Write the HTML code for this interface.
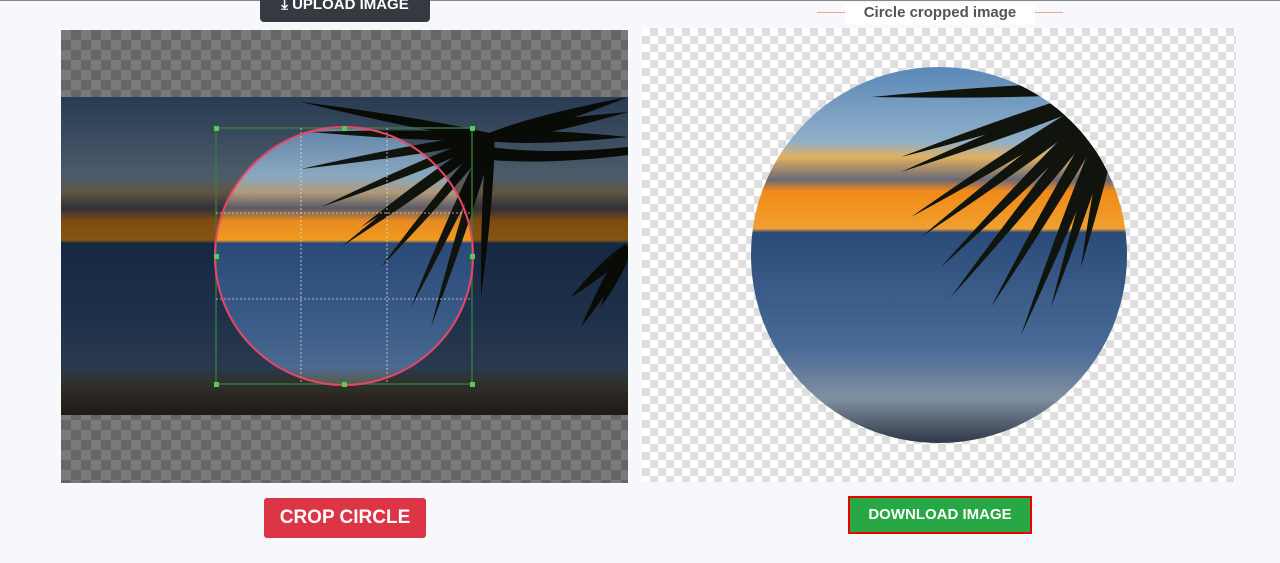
<!DOCTYPE html>
<html><head><meta charset="utf-8"><style>
body{margin:0;width:1280px;height:563px;background:#f7f8fc;position:relative;overflow:hidden;font-family:"Liberation Sans",sans-serif}
.topline{position:absolute;left:0;top:0;width:1280px;height:1px;background:#888}
.chkD{background-color:#7a7a7a;background-image:linear-gradient(45deg,#666 25%,transparent 25%,transparent 75%,#666 75%),linear-gradient(45deg,#666 25%,transparent 25%,transparent 75%,#666 75%);background-size:20px 20px;background-position:0 0,10px 10px}
.chkL{background-color:#fff;background-image:linear-gradient(45deg,#ddd 25%,transparent 25%,transparent 75%,#ddd 75%),linear-gradient(45deg,#ddd 25%,transparent 25%,transparent 75%,#ddd 75%);background-size:16px 16px;background-position:0 0,8px 8px}
.abs{position:absolute}
.btn{position:absolute;color:#fff;font-weight:bold;text-align:center}
</style></head><body>
<div class="topline"></div>
<div class="btn" style="left:260px;top:-8px;width:170px;height:30px;background:#343a40;border-radius:4px;font-size:15px;line-height:26px;">&#x2913; UPLOAD IMAGE</div>
<div class="abs" style="left:817px;top:12px;width:28px;height:1px;background:#f2a0a0"></div>
<div class="abs" style="left:1035px;top:12px;width:28px;height:1px;background:#f2a0a0"></div>
<div class="abs" style="left:845px;top:3px;width:190px;height:22px;background:#fff;color:#555;font-size:15px;font-weight:bold;text-align:center;line-height:20px">Circle cropped image</div>

<div class="abs chkD" style="left:61px;top:30px;width:567px;height:453px"></div>
<svg class="abs" style="left:61px;top:97px" width="567" height="318" viewBox="0 0 567 318">
<defs>
<linearGradient id="sc" x1="0" y1="0" x2="0" y2="1">
<stop offset="0" stop-color="#4a6c98"/><stop offset="0.25" stop-color="#8aa8c0"/><stop offset="0.3" stop-color="#b09a78"/><stop offset="0.35" stop-color="#5a5a68"/><stop offset="0.39" stop-color="#e88a20"/><stop offset="0.45" stop-color="#f09a20"/><stop offset="0.46" stop-color="#2a4a78"/><stop offset="0.7" stop-color="#3a5a88"/><stop offset="0.85" stop-color="#4a6a90"/><stop offset="0.9" stop-color="#5a5a50"/><stop offset="1" stop-color="#3a3028"/></linearGradient>
<clipPath id="cc"><circle cx="283" cy="159" r="129"/></clipPath>
<g id="palm" fill="#10140c"></g>
</defs>
<rect width="567" height="318" fill="url(#sc)"/>
<use href="#palm"/>
<rect width="567" height="318" fill="#000" opacity="0.45"/>
<g clip-path="url(#cc)"><rect width="567" height="318" fill="url(#sc)"/><use href="#palm"/></g>
<rect x="155" y="31" width="256" height="256" fill="none" stroke="#3a7a3a" stroke-width="2" opacity="0.7"/>
<path d="M240 31V287M326 31V287M155 116H411M155 202H411" stroke="#ddd" stroke-dasharray="2 2" stroke-width="0.8"/>
<circle cx="283" cy="159" r="129" fill="none" stroke="#ee4466" stroke-width="2"/>
<g fill="#5c5"><rect x="153" y="29" width="5" height="5"/><rect x="281" y="29" width="5" height="5"/><rect x="409" y="29" width="5" height="5"/><rect x="153" y="157" width="5" height="5"/><rect x="409" y="157" width="5" height="5"/><rect x="153" y="285" width="5" height="5"/><rect x="281" y="285" width="5" height="5"/><rect x="409" y="285" width="5" height="5"/></g>
</svg>

<div class="abs chkL" style="left:642px;top:28px;width:594px;height:454px"></div>
<svg class="abs" style="left:751px;top:67px" width="377" height="376" viewBox="0 0 377 376">
<defs>
<linearGradient id="sc2" x1="0" y1="0" x2="0" y2="1">
<stop offset="0" stop-color="#5a88b8"/><stop offset="0.2" stop-color="#90b0c8"/><stop offset="0.24" stop-color="#e0b060"/><stop offset="0.3" stop-color="#6a6878"/><stop offset="0.33" stop-color="#f08a18"/><stop offset="0.43" stop-color="#f0a030"/><stop offset="0.44" stop-color="#2a4a78"/><stop offset="0.75" stop-color="#4a6a98"/><stop offset="0.88" stop-color="#8090a0"/><stop offset="1" stop-color="#303848"/></linearGradient>
<clipPath id="c2"><ellipse cx="188" cy="188" rx="188" ry="188"/></clipPath>
</defs>
<g clip-path="url(#c2)">
<rect width="377" height="376" fill="url(#sc2)"/>
<g id="palm2" fill="#10140c"></g>
</g>
</svg>

<div class="btn" style="left:264px;top:498px;width:162px;height:40px;background:#dc3545;border-radius:3px;font-size:19px;line-height:40px">CROP CIRCLE</div>
<div class="btn" style="left:848px;top:496px;width:180px;height:34px;background:#28a745;border:2px solid #e00;font-size:15px;line-height:34px">DOWNLOAD IMAGE</div>
<script>
function fronds(g,hx,hy,tips,w){var s='';tips.forEach(function(t){var dx=t[0]-hx,dy=t[1]-hy,l=Math.hypot(dx,dy),nx=-dy/l*w,ny=dx/l*w;var mx=hx+dx*0.35,my=hy+dy*0.35;s+='<path d="M'+(hx+nx*0.5)+' '+(hy+ny*0.5)+' Q'+(mx+nx)+' '+(my+ny)+' '+t[0]+' '+t[1]+' Q'+(mx-nx)+' '+(my-ny)+' '+(hx-nx*0.5)+' '+(hy-ny*0.5)+'Z"/>';});g.innerHTML+=s;}
var p=document.getElementById('palm');
fronds(p,430,40,[[240,5],[250,35],[240,72],[260,110],[300,130],[280,150],[320,170],[350,210],[370,230],[420,200]],7);
fronds(p,430,40,[[567,0],[567,15],[567,40]],9);
p.innerHTML+='<path d="M400 45 Q470 60 567 50 L567 58 Q470 70 405 60Z"/>';
fronds(p,567,150,[[520,230],[510,200],[540,210]],8);
var q=document.getElementById('palm2');
fronds(q,370,20,[[120,30],[150,90],[150,105],[160,150],[170,170],[190,200],[200,230],[240,240],[270,268],[300,240],[330,200]],9);
</script>
</body></html>
